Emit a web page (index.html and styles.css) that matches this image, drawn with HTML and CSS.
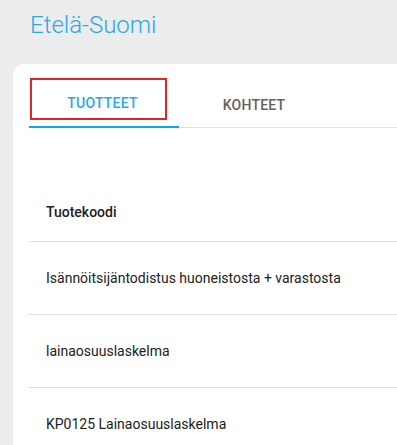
FILE: index.html
```html
<!DOCTYPE html>
<html lang="fi">
<head>
    <meta charset="UTF-8">
    <meta name="viewport" content="width=device-width, initial-scale=1.0">
    <title>Etelä-Suomi</title>
    <link rel="stylesheet" href="styles.css">
</head>
<body>
    <h1 class="pageTitle">Etelä-Suomi</h1>

    <div class="card">
        <div class="tabs">
            <div class="tab active"><span class="tabLabel">Tuotteet</span></div>
            <div class="tab"><span class="tabLabel">Kohteet</span></div>
        </div>

        <table class="products">
            <thead>
                <tr><th>Tuotekoodi</th></tr>
            </thead>
            <tbody>
                <tr><td>Isännöitsijäntodistus huoneistosta + varastosta</td></tr>
                <tr><td>lainaosuuslaskelma</td></tr>
                <tr><td>KP0125 Lainaosuuslaskelma</td></tr>
            </tbody>
        </table>
    </div>
</body>
</html>
```

FILE: styles.css
```css
html{
    height: 100%;
}

body{
    margin: 0;
    padding: 0;
    height: 100%;
    background-color: #ececec;
    font-family: Roboto, 'Liberation Sans', sans-serif;
    overflow: hidden;
}

.pageTitle{
    margin: 0;
    padding: 11px 0 0 30px;
    height: 64px;
    box-sizing: border-box;
    font-size: 24px;
    line-height: 28px;
    font-weight: 300;
    color: #29a8e8;
}

.card{
    margin-left: 13px;
    background-color: white;
    border-top-left-radius: 12px;
    padding: 14px 0 0 16px;
    height: 400px;
}

.tabs{
    display: flex;
    border-bottom: 1px solid #e0e0e0;
    height: 49px;
}

.tab{
    width: 150px;
    display: flex;
    justify-content: center;
    align-items: center;
    box-sizing: border-box;
}

.active{
    border-bottom: 2px solid #03a9f4;
    margin-bottom: -1px;
    align-items: flex-start;
}

.tabLabel{
    font-size: 14px;
    line-height: 16px;
    font-weight: 500;
    text-transform: uppercase;
    letter-spacing: 0.2px;
    color: #616161;
    padding-top: 4px;
}

.active .tabLabel{
    color: #29a8e8;
    border: 2px solid #e02424;
    padding: 15px 27px 7px 35px;
    margin-left: -11px;
}

.products{
    width: 100%;
    border-collapse: collapse;
}

.products th,
.products td{
    text-align: left;
    padding: 0 0 0 17px;
    font-size: 14px;
    color: #212121;
    border-bottom: 1px solid #e0e0e0;
}

.products th{
    font-weight: 500;
    height: 113px;
    vertical-align: bottom;
    padding-bottom: 21px;
    box-sizing: border-box;
}

.products td{
    height: 72px;
}
```
